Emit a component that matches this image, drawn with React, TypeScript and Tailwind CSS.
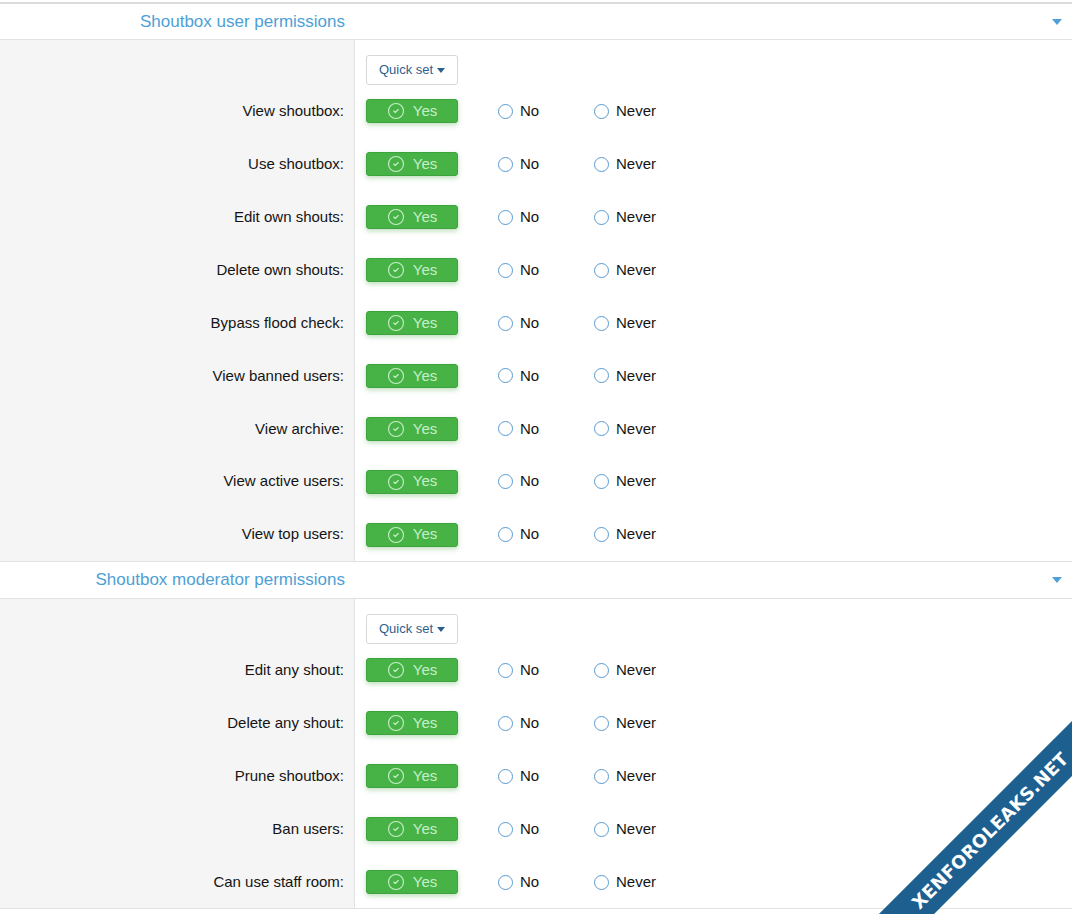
import { CircleCheck } from 'lucide-react';

const userPerms = [
  'View shoutbox:',
  'Use shoutbox:',
  'Edit own shouts:',
  'Delete own shouts:',
  'Bypass flood check:',
  'View banned users:',
  'View archive:',
  'View active users:',
  'View top users:'
];

const modPerms = [
  'Edit any shout:',
  'Delete any shout:',
  'Prune shoutbox:',
  'Ban users:',
  'Can use staff room:'
];

const Caret = ({ className }: { className: string }) => (
  <svg viewBox="0 0 10 6" className={className}>
    <path d="M0 0 L10 0 L5 6 Z" fill="currentColor" />
  </svg>
);

const Radio = ({ label }: { label: string }) => (
  <label className="flex items-center gap-[7px] text-[15px] text-[#141414]">
    <span className="w-[15px] h-[15px] rounded-full border-[1.5px] border-[#5a9ad0] bg-white" />
    <span>{label}</span>
  </label>
);

const PermRow = ({ label }: { label: string }) => (
  <div className="flex h-[52.9px]">
    <div className="w-[355px] bg-[#f5f5f5] border-r border-[#e2e2e2] flex items-center justify-end pr-[10px] text-[15px] text-[#141414]">
      {label}
    </div>
    <div className="flex-1 flex items-center pl-[11px]">
      <button className="w-[92px] h-[24px] rounded-[3px] bg-[#47b347] border border-[#3da33d] shadow-[0_2px_5px_rgba(60,160,60,0.35)] flex items-center justify-center gap-[8px] text-[15px] text-[#c8eec8]">
        <CircleCheck size={18} strokeWidth={1.5} />
        <span>Yes</span>
      </button>
      <div className="ml-[40px] w-[96px]">
        <Radio label="No" />
      </div>
      <Radio label="Never" />
    </div>
  </div>
);

const Section = ({
  title,
  perms,
  first
}: {
  title: string;
  perms: string[];
  first?: boolean;
}) => (
  <div>
    <div
      className={`flex items-center bg-white border-b border-[#e2e2e2] ${
        first ? 'h-[38px] border-t-2 border-t-[#dcdcdc]' : 'h-[37px]'
      }`}
    >
      <div className="w-[355px] pr-[10px] text-right text-[17px] text-[#4e9fd6]">
        {title}
      </div>
      <div className="flex-1 flex justify-end pr-[10px]">
        <Caret className="w-[10px] h-[6px] text-[#4e9fd6]" />
      </div>
    </div>
    <div className="flex">
      <div className="w-[355px] h-[15px] bg-[#f5f5f5] border-r border-[#e2e2e2]" />
    </div>
    <div className="flex h-[30px]">
      <div className="w-[355px] bg-[#f5f5f5] border-r border-[#e2e2e2]" />
      <div className="pl-[11px]">
        <button className="w-[92px] h-[30px] rounded-[3px] border border-[#d8d8d8] bg-white flex items-center justify-center gap-[4px] text-[13px] text-[#2d5f8e]">
          <span>Quick set</span>
          <Caret className="w-[8px] h-[5px] text-[#2d5f8e]" />
        </button>
      </div>
    </div>
    <div className="border-b border-[#e2e2e2]">
      {perms.map((p) => (
        <PermRow key={p} label={p} />
      ))}
    </div>
  </div>
);

export default function App() {
  return (
    <div className="relative w-full h-[914px] overflow-hidden bg-white pt-[2px] font-['Liberation_Sans',Arial,sans-serif]">
      <Section title="Shoutbox user permissions" perms={userPerms} first />
      <Section title="Shoutbox moderator permissions" perms={modPerms} />

      <div className="absolute left-[790px] top-[811px] w-[400px] h-[39px] bg-[#1d5f8f] -rotate-45 flex items-center justify-center">
        <span className="text-white font-bold text-[18px] tracking-[0.2px] font-['DejaVu_Sans',Verdana,sans-serif]">
          XENFOROLEAKS.NET
        </span>
      </div>
    </div>
  );
}
